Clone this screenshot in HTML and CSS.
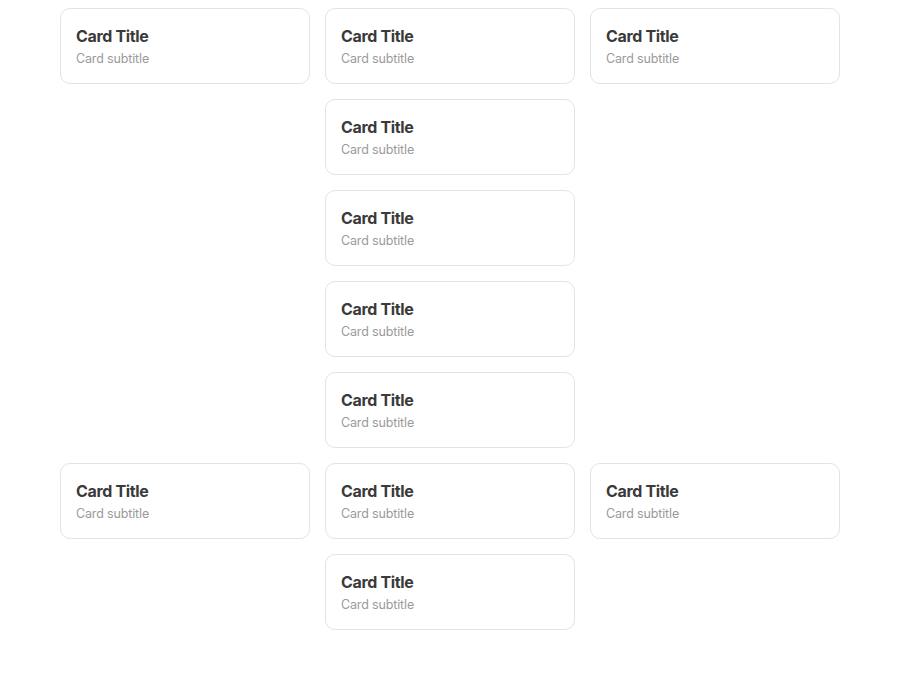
FILE: index.html
```html
<!DOCTYPE html>
<html>
<head>
<meta charset="utf-8">
<link rel="stylesheet" href="styles.css">
</head>
<body>
<div class="grid">
  <div class="card c1 r1"><div class="title">Card Title</div><div class="sub">Card subtitle</div></div>
  <div class="card c2 r1"><div class="title">Card Title</div><div class="sub">Card subtitle</div></div>
  <div class="card c3 r1"><div class="title">Card Title</div><div class="sub">Card subtitle</div></div>
  <div class="card c2 r2"><div class="title">Card Title</div><div class="sub">Card subtitle</div></div>
  <div class="card c2 r3"><div class="title">Card Title</div><div class="sub">Card subtitle</div></div>
  <div class="card c2 r4"><div class="title">Card Title</div><div class="sub">Card subtitle</div></div>
  <div class="card c2 r5"><div class="title">Card Title</div><div class="sub">Card subtitle</div></div>
  <div class="card c1 r6"><div class="title">Card Title</div><div class="sub">Card subtitle</div></div>
  <div class="card c2 r6"><div class="title">Card Title</div><div class="sub">Card subtitle</div></div>
  <div class="card c3 r6"><div class="title">Card Title</div><div class="sub">Card subtitle</div></div>
  <div class="card c2 r7"><div class="title">Card Title</div><div class="sub">Card subtitle</div></div>
</div>
</body>
</html>
```
FILE: styles.css
```css
html, body {
  margin: 0;
  padding: 0;
  background: #ffffff;
}
body {
  padding-top: 8px;
  font-family: Inter, "Liberation Sans", sans-serif;
}
.grid {
  width: 780px;
  margin: 0 auto;
  display: grid;
  grid-template-columns: repeat(3, 250px);
  grid-auto-rows: 76px;
  gap: 15px;
}
.card {
  box-sizing: border-box;
  border: 1px solid #e3e3e3;
  border-radius: 10px;
  background: #fff;
  padding: 17px 15px 14px;
}
.c1 { grid-column: 1; }
.c2 { grid-column: 2; }
.c3 { grid-column: 3; }
.r1 { grid-row: 1; }
.r2 { grid-row: 2; }
.r3 { grid-row: 3; }
.r4 { grid-row: 4; }
.r5 { grid-row: 5; }
.r6 { grid-row: 6; }
.r7 { grid-row: 7; }
.title {
  font-size: 16px;
  line-height: 20px;
  font-weight: 700;
  color: #3a3a3a;
  letter-spacing: -0.35px;
  margin-bottom: 4px;
}
.sub {
  font-size: 12.5px;
  line-height: 18px;
  color: #9a9a9a;
  letter-spacing: -0.15px;
}
```
